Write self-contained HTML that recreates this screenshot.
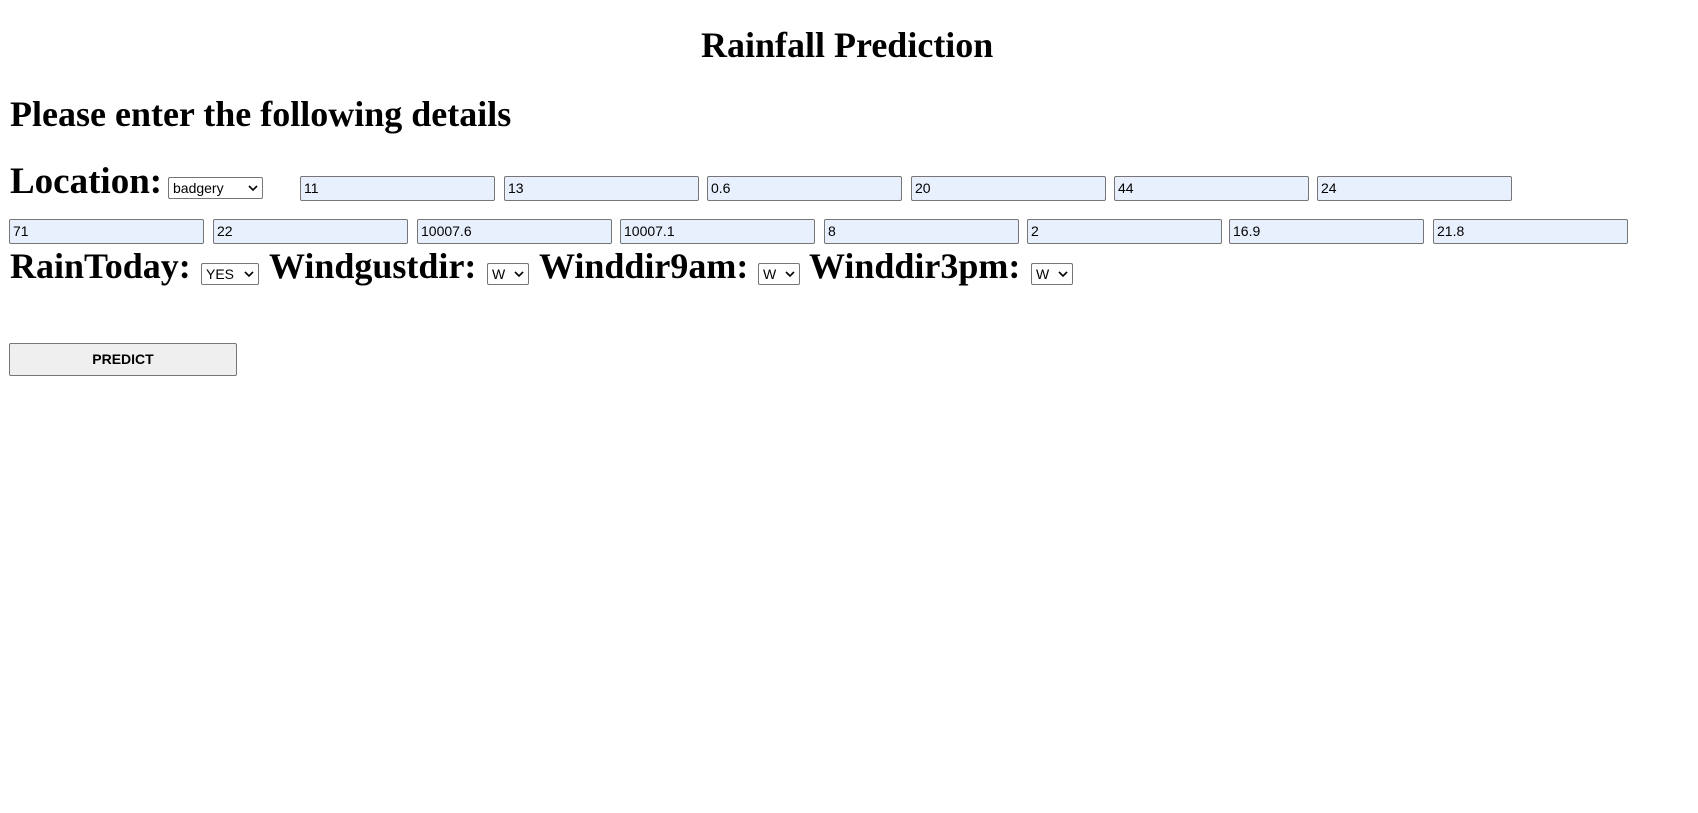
<!DOCTYPE html>
<html><head><meta charset="utf-8"><style>
body{margin:0;width:1698px;height:813px;background:#fff;position:relative;font-family:"Liberation Serif",serif;overflow:hidden}
.t{position:absolute;font-weight:bold;color:#000;white-space:nowrap;line-height:1}
.in{position:absolute;width:195px;height:25px;background:#e8f0fe;border:1px solid #767676;border-radius:2px;font:14px "Liberation Sans",sans-serif;line-height:23px;padding-left:3px;box-sizing:border-box;color:#000}
.sel{position:absolute;height:22px;border:1px solid #767676;border-radius:2px;background:#fff;font:14px "Liberation Sans",sans-serif;line-height:20px;padding-left:4px;box-sizing:border-box;color:#000}
.sel svg{position:absolute;right:4px;top:7px}
.btn{position:absolute;left:9px;top:343px;width:228px;height:33px;background:#efefef;border:1px solid #767676;border-radius:2px;box-sizing:border-box;font:bold 14px "Liberation Sans",sans-serif;text-align:center;line-height:30px}
</style></head><body>
<div class="t" style="left:701px;top:27px;font-size:36px">Rainfall Prediction</div>
<div class="t" style="left:10px;top:96px;font-size:36px">Please enter the following details</div>
<div class="t" style="left:10px;top:163px;font-size:37px">Location:</div>
<div class="sel" style="left:168px;top:177px;width:95px">badgery<svg width="10" height="7" viewBox="0 0 10 7"><path d="M1 1l4 4 4-4" stroke="#000" stroke-width="1.6" fill="none"/></svg></div>
<div class="in" style="left:300px;top:176px">11</div>
<div class="in" style="left:504px;top:176px">13</div>
<div class="in" style="left:707px;top:176px">0.6</div>
<div class="in" style="left:911px;top:176px">20</div>
<div class="in" style="left:1114px;top:176px">44</div>
<div class="in" style="left:1317px;top:176px">24</div>
<div class="in" style="left:9px;top:219px">71</div>
<div class="in" style="left:213px;top:219px">22</div>
<div class="in" style="left:417px;top:219px">10007.6</div>
<div class="in" style="left:620px;top:219px">10007.1</div>
<div class="in" style="left:824px;top:219px">8</div>
<div class="in" style="left:1027px;top:219px">2</div>
<div class="in" style="left:1229px;top:219px">16.9</div>
<div class="in" style="left:1433px;top:219px">21.8</div>
<div class="t" style="left:10px;top:248px;font-size:36px">RainToday:</div>
<div class="sel" style="left:201px;top:263px;width:58px">YES<svg width="10" height="7" viewBox="0 0 10 7"><path d="M1 1l4 4 4-4" stroke="#000" stroke-width="1.6" fill="none"/></svg></div>
<div class="t" style="left:269px;top:248px;font-size:36px">Windgustdir:</div>
<div class="sel" style="left:487px;top:263px;width:42px">W<svg width="10" height="7" viewBox="0 0 10 7"><path d="M1 1l4 4 4-4" stroke="#000" stroke-width="1.6" fill="none"/></svg></div>
<div class="t" style="left:539px;top:248px;font-size:36px">Winddir9am:</div>
<div class="sel" style="left:758px;top:263px;width:42px">W<svg width="10" height="7" viewBox="0 0 10 7"><path d="M1 1l4 4 4-4" stroke="#000" stroke-width="1.6" fill="none"/></svg></div>
<div class="t" style="left:809px;top:248px;font-size:36px">Winddir3pm:</div>
<div class="sel" style="left:1031px;top:263px;width:42px">W<svg width="10" height="7" viewBox="0 0 10 7"><path d="M1 1l4 4 4-4" stroke="#000" stroke-width="1.6" fill="none"/></svg></div>
<div class="btn">PREDICT</div>
</body></html>
